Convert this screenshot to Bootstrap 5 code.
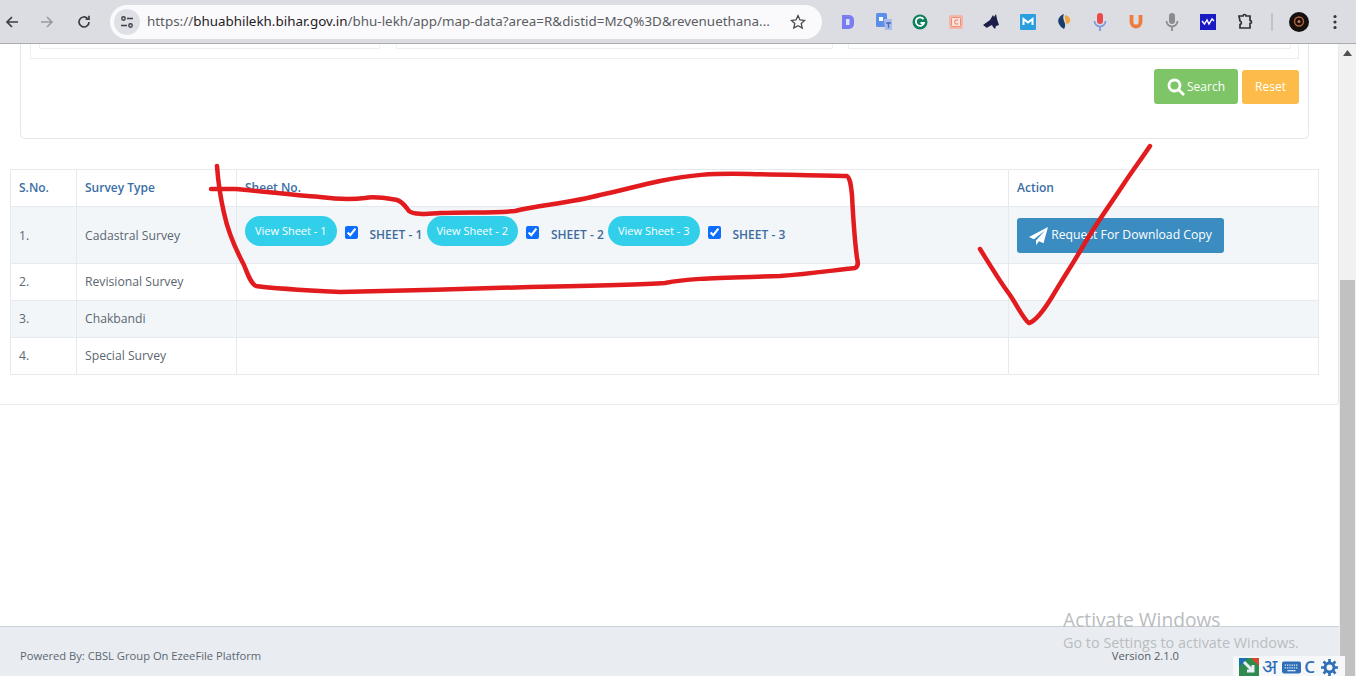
<!DOCTYPE html>
<html lang="en">
<head>
<meta charset="utf-8">
<title>Bhu-Lekh map data</title>
<link rel="stylesheet" href="https://cdn.jsdelivr.net/npm/bootstrap@5.3.0/dist/css/bootstrap.min.css">
<style>
html,body{height:100%;overflow:hidden}
body{width:1356px;height:676px;font-family:"Open Sans","Noto Sans",sans-serif;font-size:12px;color:#5c6670;background:#fff;position:relative}
.flex-none{flex:none}
.chrome-bar{height:44px;background:#dcdde2;border-bottom:1px solid #a9abb0;flex:none;padding-left:4px}
.nav-ico{width:16px;height:16px;flex:none}
.nav-fwd{margin-left:19px}
.nav-rel{margin-left:21px}
.omni{width:712px;height:34px;background:#fafafc;border-radius:17px;margin-left:18px;padding:0 16px 0 4px;flex:none}
.omni-tune{width:26px;height:26px;border-radius:50%;background:#dfe0e5;flex:none}
.omni-url{font-family:"Noto Sans","Open Sans",sans-serif;font-size:13.4px;color:#5a5d62;white-space:nowrap;margin-left:7px}
.omni-url b{font-weight:400;color:#1f2023}
.ext-row{margin-left:8px}
.ext-slot{width:36px;height:20px;flex:none;display:flex;justify-content:center;align-items:center}
.chrome-sep{width:2px;height:18px;margin-left:9px}
.view-area{height:632px;flex:none}
.page-col{width:1339px;flex:none;height:632px}
.page-main{height:361px;border-bottom:1px solid #e6e9ee;border-right:1px solid #e6e9ee;border-bottom-right-radius:4px;flex:none}
.filter-panel{height:95px;margin-left:20px;width:1289px;border:1px solid #e3e6ea;border-top:0;border-radius:0 0 5px 5px;padding:0 9px;flex:none}
.filter-row{height:15px;border:1px solid #eceef1;border-top:0;padding:0 8px}
.filter-cell{height:5px;border:1px solid #eceef1;border-top:0;border-radius:0 0 2px 2px;flex:none}
.cell-a{width:341px}
.cell-b{width:437px;margin-left:16px}
.cell-c{width:443px;margin-left:15px}
.btn-bar{gap:4px;margin-top:10px}
.btn-srch,.btn-rst{height:35px;font-size:12px;color:#fff;border:0;border-radius:3px;padding:0;display:flex;align-items:center;justify-content:center;font-family:inherit}
.btn-srch{width:84px;background:#7dc566;gap:2px}
.btn-rst{width:57px;background:#fdbc49;height:34px;margin-top:1px}
.btn-srch:hover{background:#7dc566;color:#fff}
.btn-rst:hover{background:#fdbc49;color:#fff}
.survey-tbl{width:1309px;margin:30px 0 0 10px;table-layout:fixed;font-size:12.2px;--bs-table-border-color:#e6e9ee;--bs-table-striped-bg:#f2f6f9;--bs-table-color:#5c6670;--bs-table-striped-color:#5c6670}
.survey-tbl th,.survey-tbl td{padding:0 8px;vertical-align:middle;color:#5c6670}
.survey-tbl td.cell-low{padding-top:2px}
.survey-tbl thead th{height:37px;color:#3a6ea5;font-weight:600;font-size:12px;border-bottom-width:1px}
.survey-tbl tbody tr{height:37px}
.survey-tbl tbody tr.row-tall{height:57px}
.col-sno{width:66px}
.col-type{width:160px}
.col-sheet{width:772px}
.sheet-wrap{margin-bottom:8px}
.pill-view{height:30px;width:91.5px;border-radius:15px;background:#32cfeb;color:#fff;border:0;font-size:11px;padding:0;font-family:inherit;flex:none}
.pill-view:hover{background:#32cfeb;color:#fff}
.sheet-chk{margin:0 0 0 8px;width:13px;height:13px;flex:none;accent-color:#0d6efd;position:relative;top:1px}
.sheet-lbl{font-weight:600;font-size:12px;color:#3f6c9e;margin:8px 3px 0 12px;white-space:nowrap;width:54px;flex:none}
.btn-req{height:35px;width:207px;background:#3a8cc1;color:#fff;border:0;border-radius:3px;font-size:12.2px;padding:1px 0 0;gap:3px;font-family:inherit;display:flex;align-items:center;justify-content:center}
.btn-req:hover{background:#3a8cc1;color:#fff}
.foot-bar{height:50px;background:#e9edf2;border-top:1px solid #cbd1d8;padding:9px 20px 0;flex:none;margin-top:auto;font-size:11.2px;color:#5c6670}
.foot-ver{margin-right:140px;color:#555b62;line-height:12px}
.side-scroll{width:17px;background:#f1f1f1;flex:none;position:relative}
.scroll-up{height:17px}
.scroll-thumb{position:absolute;left:1px;right:1px;top:236px;bottom:0;background:#c1c1c1}
.overlay-ink{position:absolute;left:0;top:0;width:1356px;height:676px;pointer-events:none}
.win-mark{position:absolute;left:1063px;top:608px;color:#b9bcc0;pointer-events:none;line-height:1}
.win-title{font-size:19.2px;line-height:24px}
.win-sub{font-size:14.4px;line-height:14px;margin-top:4px}
.ime-tray{position:absolute;left:1233px;top:656px;width:112px;height:20px;background:#f6f7f8;padding:2px 0 0 6px;color:#2f6fb8}
.ime-hi{font-family:"Noto Sans",sans-serif;font-size:20px;line-height:18px;color:#2f6fb8;margin-left:3px}
.ime-kb{margin-left:5px}
.ime-c{font-size:17px;font-weight:600;line-height:18px;color:#2f6fb8;margin-left:3px}
.ime-gear{margin-left:6px}
</style>
</head>
<body class="d-flex flex-column">

<header class="chrome-bar d-flex align-items-center">
  <svg class="nav-ico" viewBox="0 0 16 16" fill="none" stroke="#3c3f43" stroke-width="1.7"><path d="M14 8H3M8 3 3 8l5 5"/></svg>
  <svg class="nav-ico nav-fwd" viewBox="0 0 16 16" fill="none" stroke="#97999e" stroke-width="1.5"><path d="M2 8h11M8 3l5 5-5 5"/></svg>
  <svg class="nav-ico nav-rel" viewBox="0 0 16 16" fill="none" stroke="#3c3f43" stroke-width="1.7"><path d="M13 8a5 5 0 1 1-1.600-3.700M13 1.800v3.400H9.600"/></svg>
  <div class="omni d-flex align-items-center">
    <span class="omni-tune d-flex align-items-center justify-content-center">
      <svg width="14" height="14" viewBox="0 0 14 14" fill="none" stroke="#3c3f43" stroke-width="1.4"><circle cx="3.500" cy="3.500" r="1.700"/><path d="M7 3.500h6M1 10.500h6"/><circle cx="10.500" cy="10.500" r="1.700"/></svg>
    </span>
    <span class="omni-url">https://<b>bhuabhilekh.bihar.gov.in</b>/bhu-lekh/app/map-data?area=R&amp;distid=MzQ%3D&amp;revenuethana...</span>
    <svg class="ms-auto flex-none" width="16" height="16" viewBox="0 0 16 16" fill="none" stroke="#45484c" stroke-width="1.3"><path d="m8 1.600 2 4.300 4.600.5-3.400 3.100 1 4.600L8 11.800l-4.200 2.300 1-4.600L1.400 6.400 6 5.900z"/></svg>
  </div>
  <div class="ext-row d-flex align-items-center">
    <span class="ext-slot"><svg width="14" height="16" viewBox="0 0 14 16"><path d="M1 1h7a5 5 0 0 1 5 5v4a5 5 0 0 1-5 5H1z" fill="#7a7df2"/><rect x="5" y="5" width="3.500" height="6" fill="#dfe0fb"/></svg></span>
    <span class="ext-slot"><svg width="18" height="18" viewBox="0 0 18 18"><rect x="1" y="0" width="11" height="14" rx="1.500" fill="#5b8fe8"/><path d="M9 6h8v11H10z" fill="#a9bde8"/><rect x="4" y="4" width="4" height="4" fill="#fff"/><path d="M11 10h5M13.500 9v6" stroke="#4a6fc0" stroke-width="1.400"/></svg></span>
    <span class="ext-slot"><svg width="16" height="16" viewBox="0 0 16 16"><circle cx="8" cy="8" r="7.500" fill="#0f7f5c"/><path d="M11.500 5.200A4.200 4.200 0 1 0 12 9H8.500" fill="none" stroke="#fff" stroke-width="1.800"/></svg></span>
    <span class="ext-slot"><svg width="16" height="16" viewBox="0 0 16 16"><rect x="1" y="1" width="14" height="14" rx="2" fill="#f3b6a8"/><rect x="3.500" y="3.500" width="9" height="9" rx="1" fill="#fbe3dc" stroke="#ec8d78"/><path d="M10 6.500a2 2 0 1 0 0 3" fill="none" stroke="#ec8d78" stroke-width="1.200"/></svg></span>
    <span class="ext-slot"><svg width="18" height="16" viewBox="0 0 18 16"><path d="M0 11 7 6l3-5 1 2 2-3 1 5 2 6-3 1-1 3-2-2-1-2-4 2-1 1z" fill="#1d1f4b"/></svg></span>
    <span class="ext-slot"><svg width="16" height="16" viewBox="0 0 16 16"><rect width="16" height="16" rx="1" fill="#2a9fe0"/><path d="M3.500 11V5l4.500 3.500L12.500 5v6" fill="none" stroke="#fff" stroke-width="2"/></svg></span>
    <span class="ext-slot"><svg width="16" height="17" viewBox="0 0 16 17"><path d="M8 1C3 3 1 7 3 11c1 2 3 4 5 5 2-3 1-6 0-8-1-3-1-5 0-7z" fill="#1b3d6d"/><path d="M9 2c4 1 6 4 5 7-1 1-3 2-4 2 0-3-2-6-1-9z" fill="#f4a53b"/></svg></span>
    <span class="ext-slot"><svg width="14" height="18" viewBox="0 0 14 18"><rect x="4" y="0" width="6" height="11" rx="3" fill="#ea4a4a"/><path d="M1.500 8a5.500 5.500 0 0 0 11 0M7 13.500V18" fill="none" stroke="#7d9ce0" stroke-width="1.800"/></svg></span>
    <span class="ext-slot"><svg width="14" height="16" viewBox="0 0 14 16"><path d="M2.500 1v7a4.500 4.500 0 0 0 9 0V1" fill="none" stroke="#ee7c3e" stroke-width="3.800"/></svg></span>
    <span class="ext-slot"><svg width="14" height="18" viewBox="0 0 14 18"><rect x="4" y="0" width="6" height="11" rx="3" fill="#8a8c90"/><path d="M1.500 8a5.500 5.500 0 0 0 11 0M7 13.500V18" fill="none" stroke="#8a8c90" stroke-width="1.800"/></svg></span>
    <span class="ext-slot"><svg width="16" height="16" viewBox="0 0 16 16"><rect width="16" height="16" fill="#1a1ac4"/><path d="M2 7l2.500 3L7 6l2 4 3-5 2 2" fill="none" stroke="#fff" stroke-width="1.400"/></svg></span>
    <span class="ext-slot"><svg width="18" height="18" viewBox="0 0 18 18" fill="none" stroke="#2f3135" stroke-width="1.700"><path d="M4 3h4a1.500 1.500 0 0 1 3 0h4v4.500a1.500 1.500 0 0 1 0 3V15H5v-3.500a1.800 1.800 0 0 0 0-3.500z"/></svg></span>
    <span class="d-block flex-none bg-secondary opacity-25 chrome-sep"></span>
    <span class="ext-slot ms-2"><svg width="20" height="20" viewBox="0 0 20 20"><circle cx="10" cy="10" r="10" fill="#16110e"/><circle cx="10" cy="9.500" r="4.500" fill="none" stroke="#b5633a" stroke-width="1.400"/><circle cx="10" cy="9.500" r="1.500" fill="#c67a4d"/></svg></span>
    <span class="ext-slot"><svg width="4" height="16" viewBox="0 0 4 16" fill="#34363a"><circle cx="2" cy="2.500" r="1.600"/><circle cx="2" cy="8" r="1.600"/><circle cx="2" cy="13.500" r="1.600"/></svg></span>
  </div>
</header>

<div class="view-area d-flex">
  <div class="page-col d-flex flex-column">
    <div class="page-main">
      <div class="filter-panel">
        <div class="filter-row d-flex">
          <div class="filter-cell cell-a"></div>
          <div class="filter-cell cell-b"></div>
          <div class="filter-cell cell-c"></div>
        </div>
        <div class="btn-bar d-flex justify-content-end">
          <button type="button" class="btn btn-srch">
            <svg width="18" height="18" viewBox="0 0 18 18" fill="none" stroke="#fff" stroke-width="2.800"><circle cx="7.500" cy="7.500" r="5.500"/><path d="m11.500 11.500 5.500 5.500"/></svg>
            Search
          </button>
          <button type="button" class="btn btn-rst">Reset</button>
        </div>
      </div>
      <table class="table table-bordered table-striped survey-tbl">
        <colgroup><col class="col-sno"><col class="col-type"><col class="col-sheet"><col></colgroup>
        <thead>
          <tr><th>S.No.</th><th>Survey Type</th><th>Sheet No.</th><th>Action</th></tr>
        </thead>
        <tbody>
          <tr class="row-tall">
            <td class="cell-low">1.</td>
            <td class="cell-low">Cadastral Survey</td>
            <td>
              <div class="sheet-wrap d-flex align-items-center">
                <button type="button" class="btn pill-view">View Sheet - 1</button>
                <input class="sheet-chk" type="checkbox" checked aria-label="Sheet 1">
                <span class="sheet-lbl">SHEET - 1</span>
                <button type="button" class="btn pill-view">View Sheet - 2</button>
                <input class="sheet-chk" type="checkbox" checked aria-label="Sheet 2">
                <span class="sheet-lbl">SHEET - 2</span>
                <button type="button" class="btn pill-view">View Sheet - 3</button>
                <input class="sheet-chk" type="checkbox" checked aria-label="Sheet 3">
                <span class="sheet-lbl">SHEET - 3</span>
              </div>
            </td>
            <td>
              <button type="button" class="btn btn-req">
                <svg width="19" height="18" viewBox="0 0 19 18" fill="#fff"><path d="M19 0 0 10l5 2.200L16 3.500 7 13.500V18l3-3.800 4.500 2z"/></svg>
                Request For Download Copy
              </button>
            </td>
          </tr>
          <tr><td>2.</td><td>Revisional Survey</td><td></td><td></td></tr>
          <tr><td>3.</td><td>Chakbandi</td><td></td><td></td></tr>
          <tr><td>4.</td><td>Special Survey</td><td></td><td></td></tr>
        </tbody>
      </table>
    </div>
    <footer class="foot-bar d-flex align-items-center justify-content-between">
      <span>Powered By: CBSL Group On EzeeFile Platform</span>
      <span class="foot-ver">Version 2.1.0</span>
    </footer>
  </div>
  <div class="side-scroll">
    <div class="scroll-up d-flex align-items-center justify-content-center">
      <svg width="9" height="6" viewBox="0 0 9 6" fill="#505050"><path d="M4.500 0 9 6H0z"/></svg>
    </div>
    <div class="scroll-thumb"></div>
  </div>
</div>

<svg class="overlay-ink" viewBox="0 0 1356 676" fill="none" stroke="#e21b1e" stroke-width="4.500" stroke-linecap="round" stroke-linejoin="round" aria-hidden="true">
  <path d="M217 166C218 180 221 200 224 213C228 232 236 250 244 265C248 275 251 284 256 286C270 288 300 290 340 292C400 291 470 289 530 287C590 286 640 285 665 283C690 278 720 278 780 276C810 274 835 270 855 268C859 266 858 262 857 258C854 235 853 215 852 195C851 185 850 178 847 176C820 175 780 175 750 174C710 173 690 175 660 181C640 185 620 191 600 195C570 203 540 205 515 211C495 213 470 212 440 213C425 214 414 215 409 211C405 206 403 202 397 200C385 198 375 196 365 198C350 200 335 199 320 197C290 195 260 191 235 189L211 189"/>
  <path d="M980 249C990 265 1000 282 1010 295C1018 307 1024 320 1029 323C1036 321 1044 310 1052 297C1062 280 1072 265 1082 248C1095 225 1110 205 1125 182C1133 170 1142 158 1150 146"/>
</svg>

<div class="win-mark">
  <div class="win-title">Activate Windows</div>
  <div class="win-sub">Go to Settings to activate Windows.</div>
</div>

<div class="ime-tray d-flex align-items-center">
  <svg width="20" height="18" viewBox="0 0 20 18" class="flex-none"><rect width="20" height="18" fill="#2f8a4e"/><path d="M0 0h9L0 9z" fill="#1a6fb5"/><path d="M12 0h8v8z" fill="#d8462f"/><path d="M5 4l9 9M14 7v6H8" fill="none" stroke="#e8eef7" stroke-width="3"/></svg>
  <span class="ime-hi">अ</span>
  <svg width="19" height="13" viewBox="0 0 21 13" class="flex-none ime-kb"><rect width="21" height="13" rx="2" fill="#2f6fb8"/><path d="M3 4h15M3 7h15" stroke="#dfe9f5" stroke-width="1.400" stroke-dasharray="1.500 1"/><path d="M6 10h9" stroke="#dfe9f5" stroke-width="1.400"/></svg>
  <span class="ime-c">C</span>
  <svg width="17" height="17" viewBox="0 0 17 17" class="flex-none ime-gear"><circle cx="8.500" cy="8.500" r="4.500" fill="none" stroke="#2f6fb8" stroke-width="3"/><path d="M8.500 0v3M8.500 14v3M0 8.500h3M14 8.500h3M2.500 2.500l2 2M12.500 12.500l2 2M14.500 2.500l-2 2M4.500 12.500l-2 2" stroke="#2f6fb8" stroke-width="2.600"/></svg>
</div>

</body>
</html>
